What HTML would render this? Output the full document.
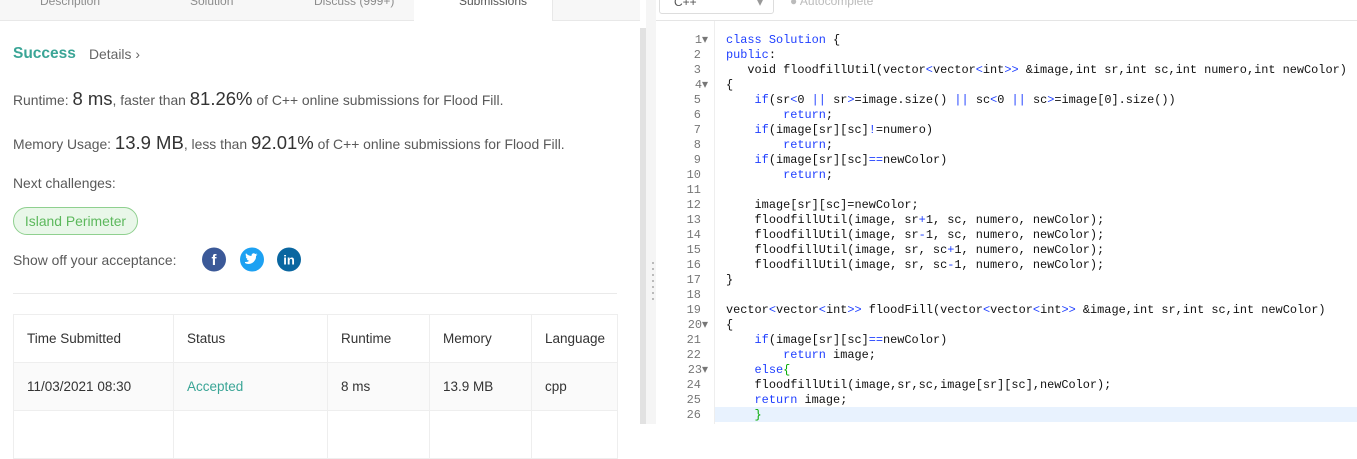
<!DOCTYPE html>
<html><head><style>
body{margin:0;width:1357px;height:424px;overflow:hidden;background:#fff;font-family:"Liberation Sans",sans-serif;position:relative}
.a{position:absolute}
.tabs{left:0;top:0;width:640px;height:20px;background:#f7f7f7;border-bottom:1px solid #e8e8e8}
.tab{top:-6px;font-size:12px;color:#8c8c8c}
.t{font-size:13.9px;color:#595959}
.code{font-family:"Liberation Mono",monospace;font-size:11.9px;color:#111;white-space:pre;line-height:15px}
.k{color:#1f3fff}
.n{color:#777}
table{border-collapse:collapse;font-size:13.5px;color:#333}
td{border:1px solid #eee;padding:0 0 0 13px;height:47px}
</style></head><body>
<div class="a tabs"></div>
<div class="a" style="left:414px;top:0;width:138px;height:21px;background:#fff;border-right:1px solid #e8e8e8"></div>
<div class="a tab" style="left:40px">Description</div>
<div class="a tab" style="left:190px">Solution</div>
<div class="a tab" style="left:314px">Discuss (999+)</div>
<div class="a tab" style="left:459px;color:#555">Submissions</div>
<div class="a" style="left:640px;top:28px;width:6px;height:396px;background:#e2e2e2"></div>
<div class="a" style="left:646px;top:0;width:10px;height:424px;background:#f5f5f5"></div>
<div class="a" style="left:652px;top:262px;width:2px;height:40px;background:repeating-linear-gradient(#bbb 0 2px,transparent 2px 6px)"></div>

<div class="a" style="left:13px;top:45px;font-size:15.5px;font-weight:bold;color:#3aa596">Success</div>
<div class="a t" style="left:89px;top:46px;color:#666">Details ›</div>
<div class="a t" style="left:13px;top:88px">Runtime: <span style="font-size:18.5px;color:#333">8 ms</span>, faster than <span style="font-size:18.5px;color:#333">81.26%</span> of C++ online submissions for Flood Fill.</div>
<div class="a t" style="left:13px;top:132px">Memory Usage: <span style="font-size:18.5px;color:#333">13.9 MB</span>, less than <span style="font-size:18.5px;color:#333">92.01%</span> of C++ online submissions for Flood Fill.</div>
<div class="a t" style="left:13px;top:175px">Next challenges:</div>
<div class="a" style="left:13px;top:207px;width:125px;height:28px;border:1px solid #8fd08f;background:#e9f7e9;border-radius:14px;box-sizing:border-box;font-size:13.9px;color:#5cb85c;line-height:26px;text-align:center">Island Perimeter</div>
<div class="a t" style="left:13px;top:252px">Show off your acceptance:</div>
<svg class="a" style="left:200px;top:246px" width="104" height="27">
<circle cx="14" cy="13.5" r="12" fill="#3b5998"/><text x="14" y="19" fill="#fff" font-size="15" font-weight="bold" text-anchor="middle" font-family="Liberation Sans">f</text>
<circle cx="52" cy="13.5" r="12" fill="#1da1f2"/><path d="M45 17c3 2 8 1 10-3 1-1 1-3 1-4l1.5-1.5-1.5.3.9-1.3-1.6.5c-1.5-1.5-4-.5-3.8 2-2.5-.2-4-1-5.5-2.7-.8 1.5 0 3 .8 3.5l-1-.3c0 1.3 1 2.3 2 2.5h-1c.4 1.2 1.5 1.8 2.5 1.8-1.2 1-2.5 1.3-4.3 1.2z" fill="#fff"/>
<circle cx="89" cy="13.5" r="12" fill="#0a66a0"/><text x="89" y="18.5" fill="#fff" font-size="13" font-weight="bold" text-anchor="middle" font-family="Liberation Sans">in</text>
</svg>
<div class="a" style="left:13px;top:293px;width:604px;height:1px;background:#eaeaea"></div>
<table class="a" style="left:13px;top:314px;width:605px;table-layout:fixed">
<tr><td style="width:146px">Time Submitted</td><td style="width:140px">Status</td><td style="width:88px">Runtime</td><td style="width:88px">Memory</td><td>Language</td></tr>
<tr style="background:#fafafa"><td>11/03/2021 08:30</td><td style="color:#3aa596">Accepted</td><td>8 ms</td><td>13.9 MB</td><td>cpp</td></tr>
<tr><td></td><td></td><td></td><td></td><td></td></tr>
</table>

<div class="a" style="left:659px;top:-6px;width:115px;height:20px;border:1px solid #ddd;border-radius:3px;font-size:12px;color:#555;box-sizing:border-box;padding-left:14px">C++ <span style="float:right;margin-right:10px;color:#999">▾</span></div>
<div class="a" style="left:790px;top:-6px;font-size:12px;color:#bbb">● Autocomplete</div>
<div class="a" style="left:656px;top:20px;width:701px;height:1px;background:#e5e5e5"></div>
<div class="a" style="left:714px;top:21px;width:643px;height:403px;border-left:1px solid #eee"></div>
<div class="a" style="left:715px;top:407px;width:642px;height:15px;background:#e8f2fe"></div>
<div class="a code n" style="left:660px;top:33px;width:48px;text-align:right">1▾
2 
3 
4▾
5 
6 
7 
8 
9 
10 
11 
12 
13 
14 
15 
16 
17 
18 
19 
20▾
21 
22 
23▾
24 
25 
26 </div>
<div class="a code" style="left:726px;top:33px"><span class="k">class</span> <span class="k">Solution</span> {
<span class="k">public</span>:
   void floodfillUtil(vector<span class="k">&lt;</span>vector<span class="k">&lt;</span>int<span class="k">&gt;&gt;</span> &amp;image,int sr,int sc,int numero,int newColor)
{
    <span class="k">if</span>(sr<span class="k">&lt;</span>0 <span class="k">||</span> sr<span class="k">&gt;</span>=image.size() <span class="k">||</span> sc<span class="k">&lt;</span>0 <span class="k">||</span> sc<span class="k">&gt;</span>=image[0].size())
        <span class="k">return</span>;
    <span class="k">if</span>(image[sr][sc]<span class="k">!</span>=numero)
        <span class="k">return</span>;
    <span class="k">if</span>(image[sr][sc]<span class="k">==</span>newColor)
        <span class="k">return</span>;

    image[sr][sc]=newColor;
    floodfillUtil(image, sr<span class="k">+</span>1, sc, numero, newColor);
    floodfillUtil(image, sr<span class="k">-</span>1, sc, numero, newColor);
    floodfillUtil(image, sr, sc<span class="k">+</span>1, numero, newColor);
    floodfillUtil(image, sr, sc<span class="k">-</span>1, numero, newColor);
}

vector<span class="k">&lt;</span>vector<span class="k">&lt;</span>int<span class="k">&gt;&gt;</span> floodFill(vector<span class="k">&lt;</span>vector<span class="k">&lt;</span>int<span class="k">&gt;&gt;</span> &amp;image,int sr,int sc,int newColor)
{
    <span class="k">if</span>(image[sr][sc]<span class="k">==</span>newColor)
        <span class="k">return</span> image;
    <span class="k">else</span><span style="color:#0a0">{</span>
    floodfillUtil(image,sr,sc,image[sr][sc],newColor);
    <span class="k">return</span> image;
    <span style="color:#0a0">}</span></div>
</body></html>
